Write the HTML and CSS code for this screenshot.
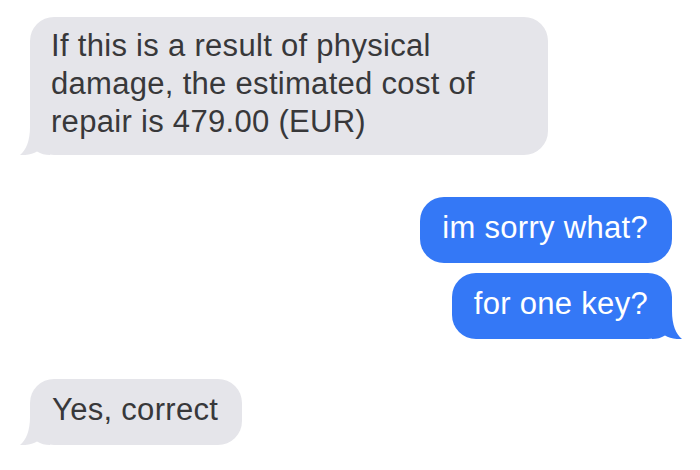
FILE: index.html
```html
<!DOCTYPE html>
<html>
<head>
<meta charset="utf-8">
<link rel="stylesheet" href="styles.css">
</head>
<body>
<div class="thread">
  <div class="bubble in wide first">
    If this is a result of physical<br>damage, the estimated cost of<br>repair is 479.00 (EUR)
    <svg class="tail tail-left" viewBox="0 0 30 28" width="30" height="28"><path d="M10 0 C10 14 6 23 0 28 C7 28.5 13 27 17 24.5 C21 27 25 28 30 28 L30 0 Z"/></svg>
  </div>
  <div class="bubble out gap-lg">im sorry what?</div>
  <div class="bubble out gap-sm">for one key?
    <svg class="tail tail-right" viewBox="0 0 30 28" width="30" height="28"><path d="M10 0 C10 14 6 23 0 28 C7 28.5 13 27 17 24.5 C21 27 25 28 30 28 L30 0 Z"/></svg>
  </div>
  <div class="bubble in gap-md">Yes, correct
    <svg class="tail tail-left" viewBox="0 0 30 28" width="30" height="28"><path d="M10 0 C10 14 6 23 0 28 C7 28.5 13 27 17 24.5 C21 27 25 28 30 28 L30 0 Z"/></svg>
  </div>
</div>
</body>
</html>
```
FILE: styles.css
```css
html, body {
  margin: 0;
  padding: 0;
  background: #ffffff;
}
body {
  width: 700px;
  height: 470px;
  overflow: hidden;
  font-family: "Liberation Sans", Arial, sans-serif;
}
.thread {
  display: flex;
  flex-direction: column;
  padding: 17px 28px 0 30px;
}
.bubble {
  position: relative;
  font-size: 31px;
  line-height: 38px;
  letter-spacing: 0.3px;
  padding: 12px 24px 16px 22px;
  border-radius: 24px;
  white-space: nowrap;
}
.bubble.in {
  align-self: flex-start;
  background: #e5e5ea;
  color: #38383a;
}
.bubble.out {
  align-self: flex-end;
  background: #3478f6;
  color: #ffffff;
}
.bubble.wide {
  width: 518px;
  box-sizing: border-box;
  padding: 10px 22px 14px 21px;
}
.gap-lg { margin-top: 42px; }
.gap-sm { margin-top: 10px; }
.gap-md { margin-top: 40px; }
.tail {
  position: absolute;
  bottom: 0;
  display: block;
}
.tail-left {
  left: -10px;
}
.tail-right {
  right: -10px;
  transform: scaleX(-1);
}
.in .tail path { fill: #e5e5ea; }
.out .tail path { fill: #3478f6; }
```
